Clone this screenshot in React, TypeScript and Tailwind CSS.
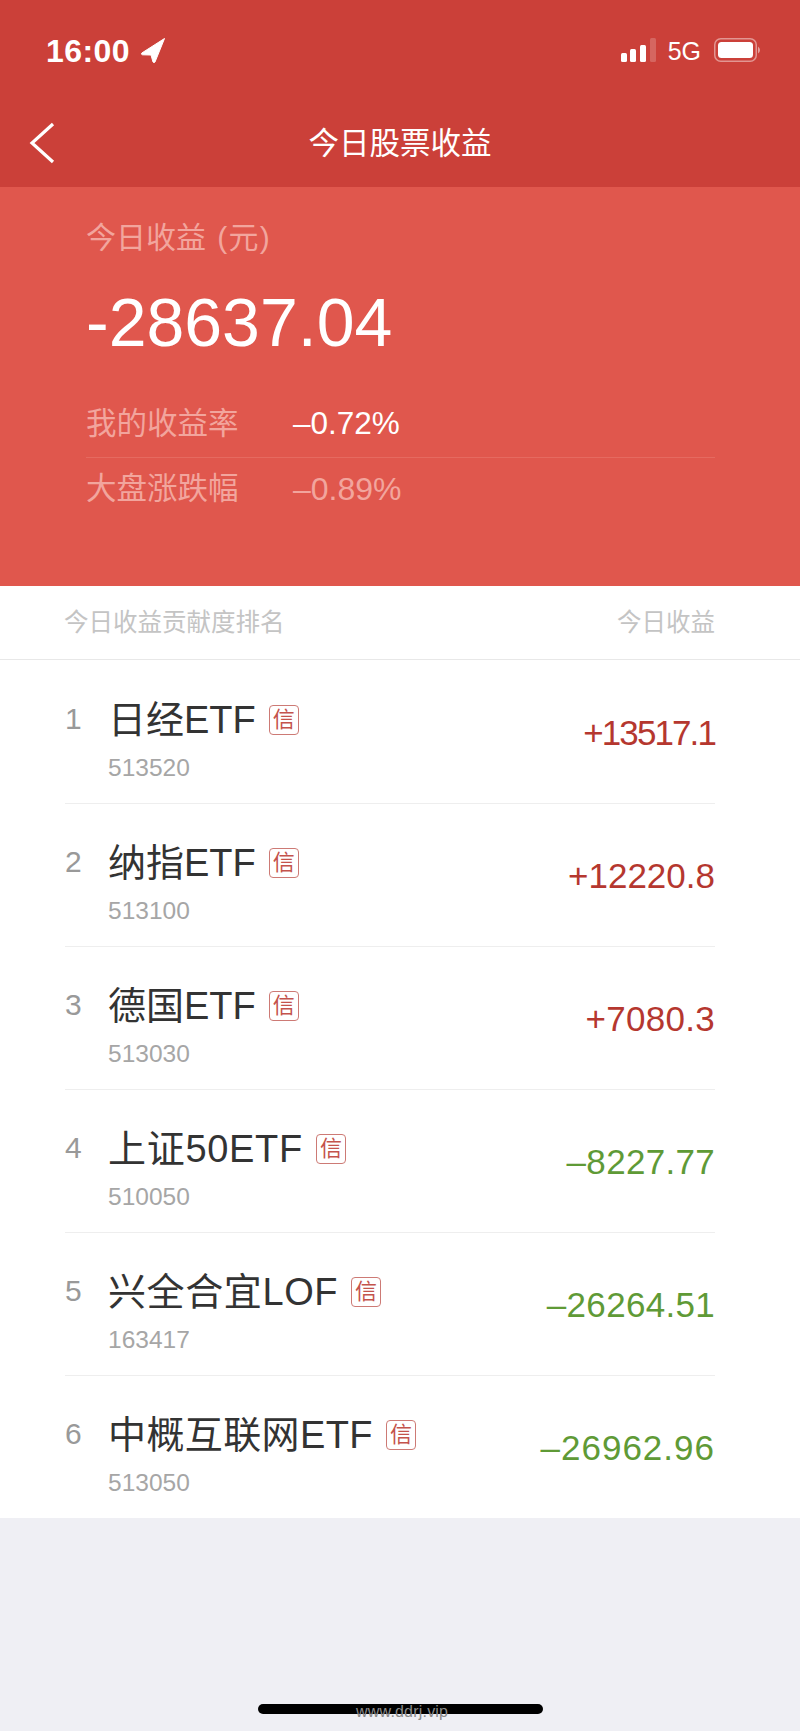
const fontStack = "font-['Liberation_Sans','Noto_Sans_CJK_SC',sans-serif]";

const stocks = [
  { rank: 1, name: "日经ETF", code: "513520", value: "+13517.1", up: true, nameFit: "", valueFit: "tracking-[-1.9px]" },
  { rank: 2, name: "纳指ETF", code: "513100", value: "+12220.8", up: true, nameFit: "", valueFit: "" },
  { rank: 3, name: "德国ETF", code: "513030", value: "+7080.3", up: true, nameFit: "", valueFit: "tracking-[0.3px]" },
  { rank: 4, name: "上证50ETF", code: "510050", value: "–8227.77", up: false, nameFit: "tracking-[0.7px]", valueFit: "tracking-[0.3px]" },
  { rank: 5, name: "兴全合宜LOF", code: "163417", value: "–26264.51", up: false, nameFit: "tracking-[0.6px]", valueFit: "tracking-[0.3px]" },
  { rank: 6, name: "中概互联网ETF", code: "513050", value: "–26962.96", up: false, nameFit: "tracking-[0.4px]", valueFit: "tracking-[1px]" },
];

function StatusBar() {
  return (
    <div className="h-[100px] flex items-center justify-between pl-[46px] pr-[40px] pt-[2px] text-white">
      <div className="flex items-center gap-[11px]">
        <span className="text-[32px] leading-none font-bold tracking-[0.4px]">16:00</span>
        {/* location arrow */}
        <svg width="24" height="25" viewBox="0 0 24 25" className="mt-[-1px]">
          <path d="M23.5 0.5 L0.8 15 Q0 16.6 1.5 16.8 L10 17 L12 24 Q13 25 14 24 Z" fill="#fff" stroke="#fff" strokeWidth="1" strokeLinejoin="round" />
        </svg>
      </div>
      <div className="flex items-center">
        <svg width="35" height="24" viewBox="0 0 35 24" className="mt-[-2px]">
          <rect x="0" y="15" width="6" height="9" rx="1.5" fill="#fff" />
          <rect x="9" y="11" width="6" height="13" rx="1.5" fill="#fff" />
          <rect x="19" y="7" width="6" height="17" rx="1.5" fill="#fff" />
          <rect x="29" y="0" width="6" height="24" rx="1.5" fill="#fff" fillOpacity="0.2" />
        </svg>
        <span className="ml-[12px] text-[25px] leading-none">5G</span>
        <svg width="46" height="24" viewBox="0 0 46 24" className="ml-[13px] mt-[-2px]">
          <rect x="0.75" y="0.75" width="41.5" height="22.5" rx="6" fill="none" stroke="#fff" strokeOpacity="0.45" strokeWidth="1.5" />
          <rect x="4" y="4" width="35" height="16" rx="3.5" fill="#fff" />
          <path d="M44 8.5 Q46 10 46 12 Q46 14 44 15.5 Z" fill="#fff" fillOpacity="0.5" />
        </svg>
      </div>
    </div>
  );
}

function NavBar() {
  return (
    <div className="relative h-[87px] flex items-center justify-center text-white">
      <svg width="26" height="42" viewBox="0 0 26 42" className="absolute left-[29px] top-[22px]">
        <path d="M24 2 L3 21 L24 40" fill="none" stroke="#fff" strokeWidth="3.2" />
      </svg>
      <span className="text-[30.5px] leading-none">今日股票收益</span>
    </div>
  );
}

function Hero() {
  return (
    <div className="h-[399px] bg-[#e0574d] pl-[86px] pr-[85px] pt-[35px]">
      <div className="h-[32px] leading-[32px] text-[30px] text-[#f2a59d]">
        今日收益 <span className="ml-[3px] tracking-[1.2px]">(元)</span>
      </div>
      <div className="mt-[28px] h-[80px] leading-[80px] text-[68px] text-white">-28637.04</div>
      <div className="mt-[28px] h-[68px] flex items-center border-b border-[#e56a60]">
        <span className="w-[207px] text-[30.5px] text-[#f2a59d]">我的收益率</span>
        <span className="text-[31.5px] text-white">–0.72%</span>
      </div>
      <div className="mt-px h-[60px] flex items-center">
        <span className="w-[207px] text-[30.5px] text-[#f2a59d]">大盘涨跌幅</span>
        <span className="text-[32px] text-[#f2a59d]">–0.89%</span>
      </div>
    </div>
  );
}

function StockRow({ stock, last }: { stock: (typeof stocks)[number]; last: boolean }) {
  return (
    <div className={`flex ${last ? "h-[142px]" : "h-[143px] border-b border-[#eeeeee]"}`}>
      <div className="w-[43px] mt-[38px] h-[40px] leading-[40px] text-[30px] text-[#999999]">{stock.rank}</div>
      <div className="flex-1">
        <div className="mt-[36px] h-[46px] flex items-center">
          <span className={`text-[38px] leading-none text-[#333333] ${stock.nameFit}`}>{stock.name}</span>
          <span className="ml-[13px] w-[30px] h-[30px] flex items-center justify-center border border-[#cd7a75] rounded-[4px] text-[22px] leading-none text-[#c4534c]">
            信
          </span>
        </div>
        <div className="mt-[10px] h-[30px] leading-[30px] text-[24.5px] text-[#a6a6a6]">{stock.code}</div>
      </div>
      <div className={`mt-[50px] h-[44px] leading-[44px] text-[35px] ${stock.valueFit} ${stock.up ? "text-[#b5372f]" : "text-[#5f9a36]"}`}>
        {stock.value}
      </div>
    </div>
  );
}

export default function App() {
  return (
    <div className={`relative w-[800px] h-[1731px] overflow-hidden bg-[#efeff4] ${fontStack}`}>
      <div className="bg-[#cb4039]">
        <StatusBar />
        <NavBar />
      </div>
      <Hero />

      <div className="bg-white">
        <div className="h-[74px] flex items-center justify-between pl-[64px] pr-[85px] pt-px border-b border-[#e8e8e8] text-[24.5px] text-[#c4c4c4]">
          <span>今日收益贡献度排名</span>
          <span>今日收益</span>
        </div>
        <div className="pt-px pl-[65px] pr-[85px]">
          {stocks.map((s, i) => (
            <StockRow key={s.rank} stock={s} last={i === stocks.length - 1} />
          ))}
        </div>
      </div>

      {/* home indicator with watermark on top */}
      <div className="absolute left-[258px] top-[1704px] w-[285px] h-[10px] rounded-full bg-black" />
      <div className="absolute left-[356px] top-[1702px] text-[16px] leading-[20px] tracking-[0.2px] text-[#8a8a8a]">www.ddrj.vip</div>
    </div>
  );
}
